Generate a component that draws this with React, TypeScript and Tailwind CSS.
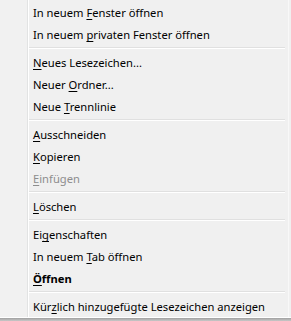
import React from "react";

type Item =
  | { sep: true }
  | { sep?: false; pre: string; acc: string; post: string; disabled?: boolean; bold?: boolean };

const items: Item[] = [
  { pre: "In neuem ", acc: "F", post: "enster öffnen" },
  { pre: "In neuem ", acc: "p", post: "rivaten Fenster öffnen" },
  { sep: true },
  { pre: "", acc: "N", post: "eues Lesezeichen..." },
  { pre: "Neuer ", acc: "O", post: "rdner..." },
  { pre: "Neue ", acc: "T", post: "rennlinie" },
  { sep: true },
  { pre: "", acc: "A", post: "usschneiden" },
  { pre: "", acc: "K", post: "opieren" },
  { pre: "", acc: "E", post: "infügen", disabled: true },
  { sep: true },
  { pre: "", acc: "L", post: "öschen" },
  { sep: true },
  { pre: "Ei", acc: "g", post: "enschaften" },
  { pre: "In neuem ", acc: "T", post: "ab öffnen" },
  { pre: "", acc: "Ö", post: "ffnen", bold: true },
  { sep: true },
  { pre: "Kür", acc: "z", post: "lich hinzugefügte Lesezeichen anzeigen" },
];

export default function App() {
  return (
    <div
      className="w-[291px] h-[321px] bg-[#f0f0f0] flex flex-col overflow-hidden"
      style={{ fontFamily: '"Noto Sans", "Open Sans", sans-serif' }}
    >
      <div className="flex flex-1">
        <div className="w-[27px] bg-[#f1f1f1]" />
        <div className="w-px bg-[#e2e3e3]" />
        <div className="w-px bg-white" />
        <div className="flex-1 flex flex-col pt-px pr-[3px]">
          {items.map((it, i) =>
            it.sep ? (
              <div key={i} className="h-[6px] flex flex-col justify-center">
                <div className="h-px bg-[#e0e0e0]" />
                <div className="h-px bg-white" />
              </div>
            ) : (
              <div
                key={i}
                className={
                  "h-[22px] flex items-center pl-[4px] pt-[2px] text-[11.2px] leading-none whitespace-nowrap " +
                  (it.disabled ? "text-[#8d8d8d] " : "text-black ") +
                  (it.bold ? "font-bold" : "")
                }
              >
                <span>
                  {it.pre}
                  <span className="underline underline-offset-[2px]">{it.acc}</span>
                  {it.post}
                </span>
              </div>
            )
          )}
        </div>
        <div className="w-px bg-[#f8f8f8]" />
        <div className="w-[2px] bg-[#f0f0f0]" />
      </div>
      <div className="h-px bg-white" />
      <div className="h-[3px] bg-gradient-to-b from-[#a0a0a0] to-[#c8c8c8]" />
    </div>
  );
}
